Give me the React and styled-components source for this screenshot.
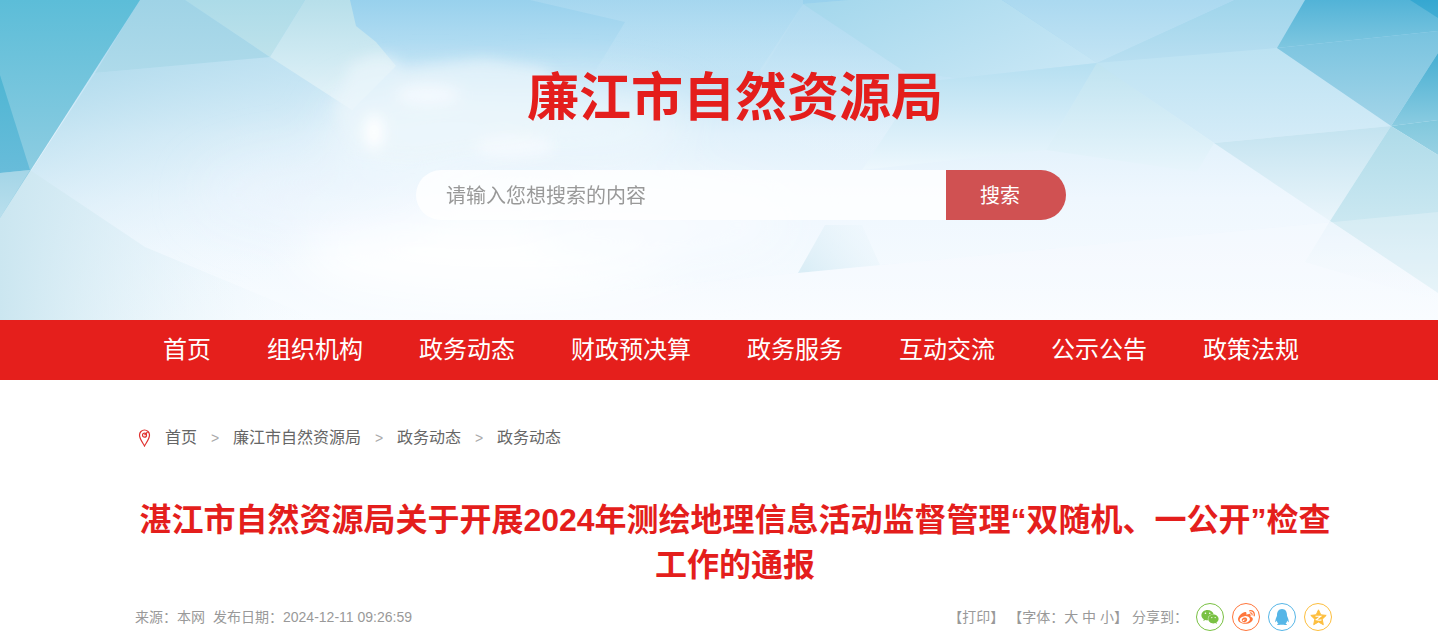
import React from 'react';
import styled, {createGlobalStyle} from 'styled-components';
import {FaWeixin, FaWeibo, FaQq} from 'react-icons/fa';

const GlobalStyle = createGlobalStyle`
    body {
        margin: 0;
        background: #fff;
        color: #666;
        font-family: "Liberation Sans", "Noto Sans CJK SC", sans-serif;
        font-size: 14px;
    }

    a {
        color: inherit;
        text-decoration: none;
    }
`;

const Header = styled.header`
    position: relative;
    height: 320px;
    overflow: hidden;
`;

const Sky = styled.svg`
    position: absolute;
    inset: 0;
    width: 100%;
    height: 100%;
`;

const HeaderContent = styled.div`
    position: relative;
    display: flex;
    flex-direction: column;
    align-items: center;
    gap: 34px;
    padding: 60px 0 0 32px;
`;

const SiteName = styled.h1`
    margin: 0;
    font-size: 52px;
    line-height: 76px;
    font-weight: bold;
    color: #e41e1c;
`;

const SearchForm = styled.form`
    display: flex;
    width: 650px;
    height: 50px;
    margin-left: 12px;
    border-radius: 25px;
    overflow: hidden;
`;

const SearchInput = styled.input`
    flex: 1;
    min-width: 0;
    padding: 0 30px;
    border: 0;
    outline: 0;
    background: rgba(255, 255, 255, .8);
    font: 20px "Noto Sans CJK SC", sans-serif;
    line-height: 48px;
    color: #666;

    &::placeholder {
        color: #999;
        opacity: 1;
    }
`;

const SearchButton = styled.button`
    width: 120px;
    padding: 0 12px 2px 0;
    border: 0;
    background: #d05152;
    color: #fff;
    font: 20px "Noto Sans CJK SC", sans-serif;
    cursor: pointer;
`;

const NavBar = styled.nav`
    padding-left: 32px;
    background: #e51f1c;
`;

const Inner = styled.div`
    max-width: 1200px;
    margin: 0 auto;
`;

const NavList = styled(Inner)`
    display: flex;
`;

const NavLink = styled.a`
    padding: 0 28px;
    font-size: 24px;
    line-height: 60px;
    color: #fff;
    white-space: nowrap;
`;

const Main = styled.main`
    padding-left: 32px;
`;

const Crumbs = styled.nav`
    display: flex;
    align-items: center;
    gap: 14px;
    margin-top: 44px;
    padding-left: 3px;
    font-size: 16px;
    line-height: 28px;
    color: #666;
`;

const Arrow = styled.span`
    width: 8px;
    font-size: 14px;
    color: #aaa;
`;

const Headline = styled.h2`
    margin: 46px 0 0;
    font-size: 32px;
    line-height: 45px;
    font-weight: bold;
    text-align: center;
    color: #e41e1c;
`;

const Meta = styled.div`
    display: flex;
    justify-content: space-between;
    align-items: center;
    margin-top: 15px;
    padding-right: 3px;
    line-height: 28px;
    color: #999;
`;

const Source = styled.div`
    display: flex;
    gap: 8px;
`;

const Tools = styled.div`
    display: flex;
    align-items: center;
    gap: 4px;
`;

const TextButton = styled.button`
    padding: 0;
    border: 0;
    background: none;
    font: inherit;
    color: inherit;
    cursor: pointer;
`;

const Share = styled.div`
    display: flex;
    gap: 8px;
    margin-left: 4px;
`;

const ShareLink = styled.a`
    display: flex;
    align-items: center;
    justify-content: center;
    width: 28px;
    height: 28px;
    box-sizing: border-box;
    border: 1px solid ${props => props.$color};
    border-radius: 50%;
    color: ${props => props.$color};
`;

const menu = ['首页', '组织机构', '政务动态', '财政预决算', '政务服务', '互动交流', '公示公告', '政策法规'];
const crumbs = ['首页', '廉江市自然资源局', '政务动态', '政务动态'];

const clear = 'rgba(240, 248, 254, 0)';

// points, start colour, end colour, gradient direction (x1 y1 x2 y2), top to bottom by default
const facets = [
    ['95,73 270,57 420,150 480,320 0,320 0,218', '#add9eb', clear, [.1, 0, .65, .8]],
    ['0,218 30,170 145,247 320,320 0,320', '#cbe6f0', clear, [0, .5, 1, .5]],
    ['140,0 185,0 270,57 95,73', '#9fd3e6', '#aedaea'],
    ['185,0 305,0 270,57', '#acdbe8', '#bee2eb'],
    ['305,0 350,0 356,26 376,42 396,66 352,110 270,57', '#b7dfea', '#e6f4fa'],
    ['0,0 140,0 0,218', '#5cbdd8', '#9bd1e4'],
    ['0,75 30,170 0,173', '#4fb6d3', '#68bcda'],
    ['0,173 30,170 0,218', '#a4d5e7', '#b9dfed'],
    ['625,22 530,0 803,0 803,4 760,75 590,80', 'rgba(178, 220, 241, .5)', clear],
    ['803,4 905,72 958,78 1002,0 850,0', '#a0d5ec', '#bfe2f3'],
    ['1002,0 1097,63 958,78 905,72 803,4 850,0', '#a3d7ec', '#c6e6f5', [0, 0, 1, .7]],
    ['803,4 905,72 895,120 862,170 770,130 760,70', 'rgba(182, 221, 241, .7)', clear],
    ['958,78 1097,63 1046,150 862,170 895,120 905,84', '#b5dff1', '#edf7fd'],
    ['1002,0 1235,0 1097,63', '#abd9f0', '#c3e4f4'],
    ['1235,0 1305,0 1277,48 1097,63', '#9fd5eb', '#b9dff1'],
    ['1097,63 1277,48 1391,126 1214,143', '#bce2f2', '#d5ecf8'],
    ['1097,63 1214,143 1197,172 1046,150', '#bfe3f0', '#e8f5fc'],
    ['1305,0 1438,0 1438,31 1277,48', '#52b3d7', '#7fc7e0'],
    ['1410,0 1438,0 1438,18', '#35a7d1', '#43aed4'],
    ['1277,48 1438,31 1438,53 1391,126', '#78c3df', '#a4d5e9'],
    ['1438,53 1438,120 1391,126', '#46aed2', '#8bcce1'],
    ['1391,126 1438,120 1438,155', '#80c8dd', '#98d1e3'],
    ['1214,143 1391,126 1330,221', '#c3e3f0', '#eaf5fb'],
    ['1391,126 1438,155 1438,293 1330,221', '#aedbe9', '#e0f1f7'],
    ['1330,221 1438,293 1438,302 1305,262', 'rgba(228, 242, 250, .8)', clear],
    ['825,225 862,225 880,265 798,273', 'rgba(215, 236, 245, .9)', 'rgba(236, 246, 252, .4)', [0, .8, 1, .3]],
];

function Backdrop () {
    return (<Sky viewBox="0 0 1438 320" preserveAspectRatio="none" aria-hidden="true">
        <defs>
            <linearGradient id="sky" x1="0" y1="0" x2="0" y2="1">
                <stop offset="0" stopColor="#98d1ed"/>
                <stop offset=".2" stopColor="#bce1f4"/>
                <stop offset=".42" stopColor="#e1f1fb"/>
                <stop offset=".62" stopColor="#eff7fe"/>
                <stop offset="1" stopColor="#f8fcff"/>
            </linearGradient>
            {facets.map(([, from, to, dir = [0, 0, 0, 1]], i) => (
                <linearGradient key={i} id={"facet" + i} x1={dir[0]} y1={dir[1]} x2={dir[2]} y2={dir[3]}>
                    <stop offset="0" stopColor={from}/>
                    <stop offset="1" stopColor={to}/>
                </linearGradient>
            ))}
            <filter id="soft" x="-50%" y="-50%" width="200%" height="200%">
                <feGaussianBlur stdDeviation="24"/>
            </filter>
            <filter id="puff" x="-50%" y="-50%" width="200%" height="200%">
                <feGaussianBlur stdDeviation="7"/>
            </filter>
        </defs>
        <rect width="1438" height="320" fill="url(#sky)"/>
        {facets.map(([points], i) => (
            <polygon key={i} points={points} fill={"url(#facet" + i + ")"}/>
        ))}
        <g filter="url(#soft)">
            <ellipse cx="490" cy="255" rx="190" ry="46" fill="#fff" opacity=".9"/>
            <ellipse cx="430" cy="130" rx="100" ry="40" fill="#f1f8fd" opacity=".9"/>
            <ellipse cx="560" cy="125" rx="130" ry="36" fill="#eff7fd" opacity=".8"/>
            <ellipse cx="320" cy="195" rx="120" ry="40" fill="#eef6fd" opacity=".5"/>
            <ellipse cx="660" cy="225" rx="130" ry="40" fill="#f8fbff" opacity=".8"/>
        </g>
        <g filter="url(#puff)">
            <path d="M350 64l26-10 18 4 10 10 30-4 50-6 60 10 30 30-30 40-130 20-60-6-20-40z" fill="#e9f5fb" opacity=".7"/>
            <ellipse cx="428" cy="95" rx="32" ry="10" fill="#f8fbff" opacity=".7"/>
            <ellipse cx="374" cy="132" rx="9" ry="17" fill="#fff"/>
            <ellipse cx="515" cy="147" rx="40" ry="12" fill="#fafcff" opacity=".6"/>
        </g>
        <path d="M600 292L798 273 1438 212V320H600z" fill="#fafdff" opacity=".25"/>
    </Sky>)
}

function Pin () {
    return (<svg width="13" height="18" viewBox="0 0 13 18" fill="none" stroke="#e0312f" strokeWidth="1.2" aria-hidden="true">
        <path d="M6.500 17C5 14 1.500 10 1.500 6A5 5 0 0 1 11.500 6C11.500 10 8 14 6.500 17z"/>
        <circle cx="6.500" cy="6.200" r="2"/>
        <path d="M6.500 6.200L9.500 3"/>
    </svg>)
}

function Qzone () {
    return (<svg width="17" height="17" viewBox="0 0 17 17" aria-hidden="true">
        <path d="M8.500 .8l2.300 5 5.400.6-4 3.800 1.100 5.500-4.800-2.700-4.800 2.700 1.100-5.500-4-3.800 5.400-.6z" fill="currentColor" stroke="currentColor" strokeLinejoin="round"/>
        <path d="M5.500 7.200h5.300l-4.600 3.600q2.600.7 5.300.1" fill="none" stroke="#fff" strokeWidth="1.1"/>
    </svg>)
}

function App () {
    return (<>
        <GlobalStyle/>
        <Header>
            <Backdrop/>
            <HeaderContent>
                <SiteName>廉江市自然资源局</SiteName>
                <SearchForm onSubmit={e => e.preventDefault()}>
                    <SearchInput type="text" aria-label="搜索内容" placeholder="请输入您想搜索的内容"/>
                    <SearchButton type="submit">搜索</SearchButton>
                </SearchForm>
            </HeaderContent>
        </Header>
        <NavBar>
            <NavList>
                {menu.map(name => <NavLink key={name} href="#">{name}</NavLink>)}
            </NavList>
        </NavBar>
        <Main>
            <Inner>
                <Crumbs>
                    <Pin/>
                    {crumbs.map((name, i) => (
                        <React.Fragment key={i}>
                            {i > 0 && <Arrow>&gt;</Arrow>}
                            <a href="#">{name}</a>
                        </React.Fragment>
                    ))}
                </Crumbs>
                <Headline>湛江市自然资源局关于开展2024年测绘地理信息活动监督管理“双随机、一公开”检查工作的通报</Headline>
                <Meta>
                    <Source>
                        <span>来源：本网</span>
                        <span>发布日期：2024-12-11 09:26:59</span>
                    </Source>
                    <Tools>
                        <TextButton type="button">【打印】</TextButton>
                        <span>
                            【字体：<TextButton type="button">大</TextButton> <TextButton type="button">中</TextButton> <TextButton type="button">小</TextButton>】
                        </span>
                        <span>分享到：</span>
                        <Share>
                            <ShareLink href="#" aria-label="微信" $color="#7ac143"><FaWeixin size={18}/></ShareLink>
                            <ShareLink href="#" aria-label="微博" $color="#ff763b"><FaWeibo size={17}/></ShareLink>
                            <ShareLink href="#" aria-label="QQ" $color="#56b6e7"><FaQq size={16}/></ShareLink>
                            <ShareLink href="#" aria-label="QQ空间" $color="#fdbe3d"><Qzone/></ShareLink>
                        </Share>
                    </Tools>
                </Meta>
            </Inner>
        </Main>
    </>)
}

export default App;
